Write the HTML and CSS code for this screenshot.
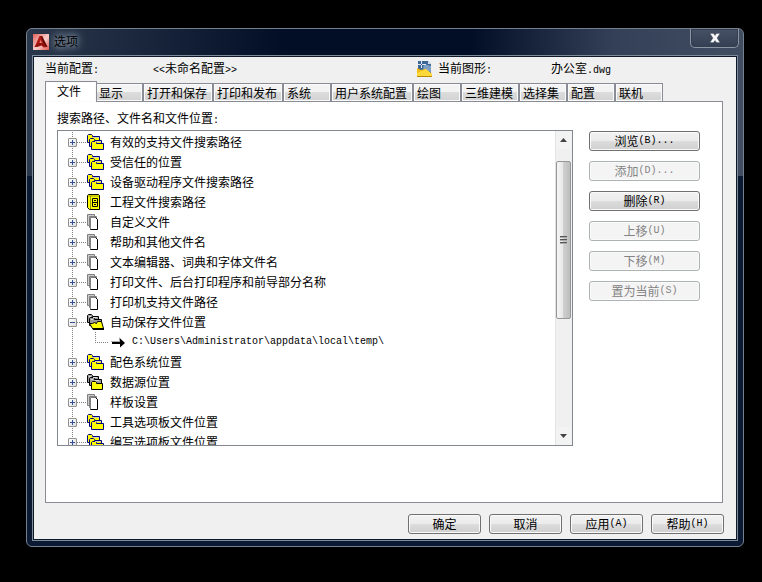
FILE: index.html
```html
<!DOCTYPE html>
<html lang="zh-CN">
<head>
<meta charset="utf-8">
<title>选项</title>
<link rel="stylesheet" href="styles.css">
</head>
<body>
<svg class="defs" width="0" height="0" aria-hidden="true">
  <defs>
    <symbol id="folders" viewBox="0 0 17 16">
      <g fill="#ff0" stroke="#000080">
        <path d="M.5 8.500v-7l1-1h3l1 1v1h7v6z"/>
        <path d="M2.500 12.500v-7l1-1h3l1 1v1h7v6z"/>
        <path d="M4.500 15.500v-7l1-1h3l1 1v1h7v6z"/>
      </g>
      <path d="M6 3h6v1H6zM8 7h6v1H8z" fill="#d4d4b0"/>
    </symbol>
    <symbol id="folders-gray" viewBox="0 0 17 16">
      <g fill="#999" stroke="#000">
        <path d="M.5 8.500v-7l1-1h3l1 1v1h6v6z"/>
        <path d="M2.500 11.500v-7l1-1h3l1 1v1h7v6z"/>
        <path d="M4.500 15.500v-7l1-1h3l1 1v1h6v6z" fill="#ff0"/>
      </g>
      <path d="M2 2h2v1H2zM6 3h4v1H6zM4 5h2v1H4zM8 6h4v1H8z" fill="#ddd"/>
    </symbol>
    <symbol id="folders-open" viewBox="0 0 17 16">
      <g fill="#999" stroke="#000">
        <path d="M.5 8.500v-7l1-1h3l1 1v1h6v6z"/>
        <path d="M2.500 11.500v-7l1-1h3l1 1v1h7v8z"/>
        <path d="M5.500 14.500l-3-5h3l2-1 2 1 1-2h4l2 7z" fill="#ff0"/>
      </g>
      <path d="M2 2h2v1H2zM6 3h4v1H6zM4 5h2v1H4z" fill="#ddd"/>
      <path d="M5 14h12v2H6z"/>
    </symbol>
    <symbol id="cabinet" viewBox="0 0 17 16">
      <path d="M.5 13.500v-12l1-1h10l1 1v14h-10z" fill="#ff0" stroke="#000"/>
      <path d="M3.500 2v13M1 2h11" fill="none" stroke="#999900"/>
      <path d="M5.500 4.500h5v4h-5zM5.500 8.500h5v4h-5z" fill="#ff0" stroke="#000"/>
      <path d="M7 6h2v1H7zM7 10h2v1H7z"/>
    </symbol>
    <symbol id="pages" viewBox="0 0 17 16">
      <g fill="#ccc" stroke="#808080">
        <path d="M.5.500h7v11h-7z"/>
        <path d="M2.500 2.500h7v11h-7z"/>
        <path d="M3.500 3.500h5l2 2v10h-7z" fill="#fff"/>
      </g>
      <path d="M8.500 3.500l2 2v10h-7" fill="none" stroke="#000"/>
    </symbol>
  </defs>
</svg>

<main class="window">
  <header class="titlebar">
    <svg class="app-icon" width="16" height="16" viewBox="0 0 16 16" aria-hidden="true">
      <defs><linearGradient id="red" x2="1" y2="1"><stop stop-color="#e0605a"/><stop offset=".55" stop-color="#f9d0cc"/><stop offset="1" stop-color="#e2554f"/></linearGradient></defs>
      <path d="M0 0h16v16H0z" fill="url(#red)"/>
      <path d="M1.500 13L6.500 2H9l5.500 11-4 .5-2-2-4 1.500z" fill="#b01b15"/>
      <path d="M7.500 6l1.500 3H6.500z" fill="#e9827a"/>
      <path d="M7.500 2H9l5.500 11-3-1z" fill="#650a06"/>
      <path d="M1.500 13L6 9l5 .5 1.500 3-4-1.500z" fill="#8c110c"/>
    </svg>
    <h1 class="title">选项</h1>
    <button class="close" type="button" aria-label="关闭">
      <svg width="12" height="10" viewBox="0 0 12 10" aria-hidden="true"><path d="M1 .5h3.500L6 2.500 7.500.5H11L8 5l3 4.500H7.500L6 7.500l-1.500 2H1L4 5z" fill="#f8f8f8" stroke="#384151" stroke-width=".3"/></svg>
    </button>
  </header>

  <div class="client">
    <div class="profile">
      <span class="profile-label">当前配置<span class="lat">:</span></span>
      <span class="profile-name"><span class="lat">&lt;&lt;</span>未命名配置<span class="lat">&gt;&gt;</span></span>
      <svg class="drawing-icon" width="16" height="16" viewBox="0 0 16 16" aria-hidden="true">
        <path d="M1 0h10l3 3v12H1z" fill="#3d6797"/>
        <path d="M11 0l3 3h-3z" fill="#dbe5f0"/>
        <path d="M7 3l7 2v6L6 8z" fill="#7fa0c4"/>
        <path d="M4.500 0v7M1 3.500h8" stroke="#dfe8f2"/>
        <path d="M4 3h1v1H4z" fill="#29517f"/>
        <path d="M0 7l4 2 4-1 7 5v3H0z" fill="#f0bd10"/>
        <path d="M0 15V12l9-4 6 5v2z" fill="#ffd83a"/>
        <path d="M0 15h15v1H0z" fill="#b98a0a"/>
      </svg>
      <span class="drawing-label">当前图形<span class="lat">:</span></span>
      <span>办公室<span class="lat">.dwg</span></span>
    </div>

    <div class="tabs" role="tablist">
      <button class="tab tab-active" type="button" role="tab" aria-selected="true">文件</button>
      <button class="tab" type="button" role="tab">显示</button>
      <button class="tab" type="button" role="tab">打开和保存</button>
      <button class="tab" type="button" role="tab">打印和发布</button>
      <button class="tab" type="button" role="tab">系统</button>
      <button class="tab" type="button" role="tab">用户系统配置</button>
      <button class="tab" type="button" role="tab">绘图</button>
      <button class="tab" type="button" role="tab">三维建模</button>
      <button class="tab" type="button" role="tab">选择集</button>
      <button class="tab" type="button" role="tab">配置</button>
      <button class="tab" type="button" role="tab">联机</button>
    </div>

    <section class="panel" role="tabpanel">
      <h2 class="caption">搜索路径、文件名和文件位置<span class="lat">:</span></h2>
      <div class="columns">
        <div class="tree">
          <ul class="nodes">
            <li class="node"><button class="toggle" type="button" aria-label="展开"></button><svg class="icon"><use href="#folders"/></svg>有效的支持文件搜索路径</li>
            <li class="node"><button class="toggle" type="button" aria-label="展开"></button><svg class="icon"><use href="#folders"/></svg>受信任的位置</li>
            <li class="node"><button class="toggle" type="button" aria-label="展开"></button><svg class="icon"><use href="#folders"/></svg>设备驱动程序文件搜索路径</li>
            <li class="node"><button class="toggle" type="button" aria-label="展开"></button><svg class="icon"><use href="#cabinet"/></svg>工程文件搜索路径</li>
            <li class="node"><button class="toggle" type="button" aria-label="展开"></button><svg class="icon"><use href="#pages"/></svg>自定义文件</li>
            <li class="node"><button class="toggle" type="button" aria-label="展开"></button><svg class="icon"><use href="#pages"/></svg>帮助和其他文件名</li>
            <li class="node"><button class="toggle" type="button" aria-label="展开"></button><svg class="icon"><use href="#pages"/></svg>文本编辑器、词典和字体文件名</li>
            <li class="node"><button class="toggle" type="button" aria-label="展开"></button><svg class="icon"><use href="#pages"/></svg>打印文件、后台打印程序和前导部分名称</li>
            <li class="node"><button class="toggle" type="button" aria-label="展开"></button><svg class="icon"><use href="#pages"/></svg>打印机支持文件路径</li>
            <li class="node"><button class="toggle toggle-open" type="button" aria-label="折叠"></button><svg class="icon"><use href="#folders-open"/></svg>自动保存文件位置</li>
            <li class="node leaf"><span class="elbow"></span><svg class="arrow" width="15" height="11" viewBox="0 0 15 11" aria-hidden="true"><path d="M0 4h8V0l5 5H0z" fill="#aaa"/><path d="M1 5h8V1.500L14 6l-5 4.500V7H1z"/></svg><span class="lat">C:\Users\Administrator\appdata\local\temp\</span></li>
            <li class="node"><button class="toggle" type="button" aria-label="展开"></button><svg class="icon"><use href="#folders"/></svg>配色系统位置</li>
            <li class="node"><button class="toggle" type="button" aria-label="展开"></button><svg class="icon"><use href="#folders-gray"/></svg>数据源位置</li>
            <li class="node"><button class="toggle" type="button" aria-label="展开"></button><svg class="icon"><use href="#pages"/></svg>样板设置</li>
            <li class="node"><button class="toggle" type="button" aria-label="展开"></button><svg class="icon"><use href="#folders"/></svg>工具选项板文件位置</li>
            <li class="node"><button class="toggle" type="button" aria-label="展开"></button><svg class="icon"><use href="#folders"/></svg>编写选项板文件位置</li>
          </ul>
          <div class="scrollbar">
            <button class="scroll-step" type="button" aria-label="向上滚动"><svg width="7" height="4" viewBox="0 0 7 4"><path d="M0 4l3.500-4L7 4z" fill="#444"/></svg></button>
            <div class="track"><div class="thumb"><span class="grip"></span></div></div>
            <button class="scroll-step" type="button" aria-label="向下滚动"><svg width="7" height="4" viewBox="0 0 7 4"><path d="M0 0l3.500 4L7 0z" fill="#444"/></svg></button>
          </div>
        </div>
        <div class="actions">
          <button class="btn" type="button">浏览<span class="lat">(B)...</span></button>
          <button class="btn" type="button" disabled>添加<span class="lat">(D)...</span></button>
          <button class="btn" type="button">删除<span class="lat">(R)</span></button>
          <button class="btn" type="button" disabled>上移<span class="lat">(U)</span></button>
          <button class="btn" type="button" disabled>下移<span class="lat">(M)</span></button>
          <button class="btn" type="button" disabled>置为当前<span class="lat">(S)</span></button>
        </div>
      </div>
    </section>

    <footer class="footer">
      <button class="btn" type="button">确定</button>
      <button class="btn" type="button">取消</button>
      <button class="btn" type="button">应用<span class="lat">(A)</span></button>
      <button class="btn" type="button">帮助<span class="lat">(H)</span></button>
    </footer>
  </div>
</main>
</body>
</html>
```
FILE: styles.css
```css
* {
  box-sizing: border-box;
}

body {
  display: flex;
  min-height: 100vh;
  margin: 0;
  padding: 28px 18px 35px 26px;
  background: #000;
  color: #000;
  font: 12px/16px "Noto Sans CJK SC", sans-serif;
}

button {
  margin: 0;
  padding: 0;
  color: inherit;
  font: inherit;
}

h1,
h2 {
  margin: 0;
  font: inherit;
}

.defs {
  position: absolute;
}

.lat {
  font-family: "Liberation Mono", monospace;
  font-size: 10px;
}

/* Window frame */
.window {
  display: flex;
  flex: 1;
  flex-direction: column;
  min-width: 0;
  padding: 0 5px 5px;
  border: 1px solid #75808e;
  border-radius: 6px;
  background:
    linear-gradient(90deg, #2b384b 0, #17243a 18%, #020e25 36%, #020e25 62%, #344057 82%, #414d61 100%) top / 100% 147px no-repeat,
    #0b1a32;
}

.titlebar {
  display: flex;
  align-items: flex-start;
  height: 26px;
}

.app-icon {
  margin: 5px 5px 0 1px;
}

.title {
  flex: 1;
  margin-top: 4px;
  text-shadow: 0 0 5px #8794a4, 0 0 8px #8794a4, 0 0 12px #8794a4;
}

.close {
  display: flex;
  align-items: center;
  justify-content: center;
  width: 49px;
  height: 19px;
  margin-right: -1px;
  border: 1px solid #8b95a3;
  border-top: 0;
  border-radius: 0 0 5px 5px;
  background: linear-gradient(#465166, #343f54);
  box-shadow: inset 0 0 0 1px #343e50;
}

.client {
  display: flex;
  flex: 1;
  flex-direction: column;
  border: 1px solid #7d8b9b;
  background: #f0f0f0;
  box-shadow: inset 0 0 0 1px #10192a;
  padding: 1px 14px 6px 12px;
}

.profile {
  display: flex;
  align-items: center;
  height: 24px;
}

.profile-label {
  width: 108px;
}

.profile-name {
  width: 264px;
}

.drawing-icon {
  margin-right: 5px;
}

.drawing-label {
  width: 113px;
}

/* Tabs */
.tabs {
  display: flex;
  align-items: flex-end;
  margin-bottom: -1px;
}

.tab {
  min-width: 48px;
  height: 19px;
  padding: 0 5px 0 3px;
  border: 1px solid #898c95;
  background: linear-gradient(#f3f3f3 50%, #dcdcdc 50%, #d2d2d2);
  box-shadow: inset 0 0 0 1px #fafafa;
  line-height: 16px;
  text-align: left;
  white-space: nowrap;
}

.tab-active {
  z-index: 1;
  width: 52px;
  height: 21px;
  margin-right: -2px;
  padding: 0 0 2px 11px;
  border-bottom: 0;
  background: #fff;
}

/* Files page */
.panel {
  flex: 1;
  padding: 8px 22px 20px 11px;
  border: 1px solid #898c95;
  background: #fff;
}

.caption {
  height: 16px;
  margin-bottom: 4px;
}

.columns {
  display: flex;
  gap: 16px;
}

.tree {
  display: flex;
  flex: 1;
  height: 316px;
  overflow: hidden;
  border: 1px solid #828790;
}

.nodes {
  flex: 1;
  margin: 0;
  padding: 1px 0 0;
  list-style: none;
}

.node {
  display: flex;
  align-items: center;
  height: 20px;
  padding-left: 10px;
  background:
    repeating-linear-gradient(#808080 0 1px, transparent 1px 2px) 14px 0 / 1px 100% no-repeat,
    repeating-linear-gradient(90deg, #808080 0 1px, transparent 1px 2px) 19px 10px / 9px 1px no-repeat;
  white-space: nowrap;
}

.toggle {
  width: 9px;
  height: 9px;
  margin-right: 10px;
  border: 1px solid #919191;
  border-radius: 1px;
  background:
    linear-gradient(#35509a, #35509a) center / 5px 1px no-repeat,
    linear-gradient(#35509a, #35509a) center / 1px 5px no-repeat,
    linear-gradient(135deg, #fff, #dcdcdc);
}

.toggle-open {
  background:
    linear-gradient(#35509a, #35509a) center / 5px 1px no-repeat,
    linear-gradient(135deg, #fff, #dcdcdc);
}

.icon {
  width: 17px;
  height: 16px;
  margin-right: 6px;
}

.leaf {
  padding-left: 37px;
  background: repeating-linear-gradient(#808080 0 1px, transparent 1px 2px) 14px 0 / 1px 100% no-repeat;
}

.elbow {
  align-self: flex-start;
  width: 13px;
  height: 11px;
  margin-right: 3px;
  border: dotted #808080;
  border-width: 0 0 1px 1px;
}

.arrow {
  margin-right: 6px;
}

/* Scrollbar */
.scrollbar {
  display: flex;
  flex-direction: column;
  width: 17px;
  padding-right: 1px;
  border-left: 1px solid #e3e3e3;
  background: #f0f0f0;
}

.scroll-step {
  display: flex;
  align-items: center;
  justify-content: center;
  height: 18px;
  border: 0;
  background: #f3f3f3;
}

.track {
  flex: 1;
  padding-top: 12px;
}

.thumb {
  display: flex;
  align-items: center;
  justify-content: center;
  height: 158px;
  border: 1px solid #979797;
  border-radius: 2px;
  background: linear-gradient(90deg, #f5f5f5, #e6e6e6 50%, #cfcfcf 50%, #bdbdbd);
}

.grip {
  width: 7px;
  height: 8px;
  background: repeating-linear-gradient(#555 0 1px, #aaa 1px 2px, transparent 2px 3px);
}

/* Push buttons */
.actions {
  display: flex;
  flex-direction: column;
  gap: 10px;
  width: 111px;
  padding-top: 1px;
}

.btn {
  display: flex;
  align-items: center;
  justify-content: center;
  height: 20px;
  border: 1px solid #707070;
  border-radius: 3px;
  background: linear-gradient(#f2f2f2, #ebebeb 50%, #dddddd 50%, #cfcfcf);
  box-shadow: inset 0 0 0 1px #fafafa;
}

.btn:disabled {
  border-color: #adb2b5;
  background: #f4f4f4;
  color: #838383;
}

.footer {
  display: flex;
  justify-content: flex-end;
  gap: 8px;
  margin-right: -1px;
  padding-top: 11px;
}

.footer .btn {
  width: 73px;
}
```
